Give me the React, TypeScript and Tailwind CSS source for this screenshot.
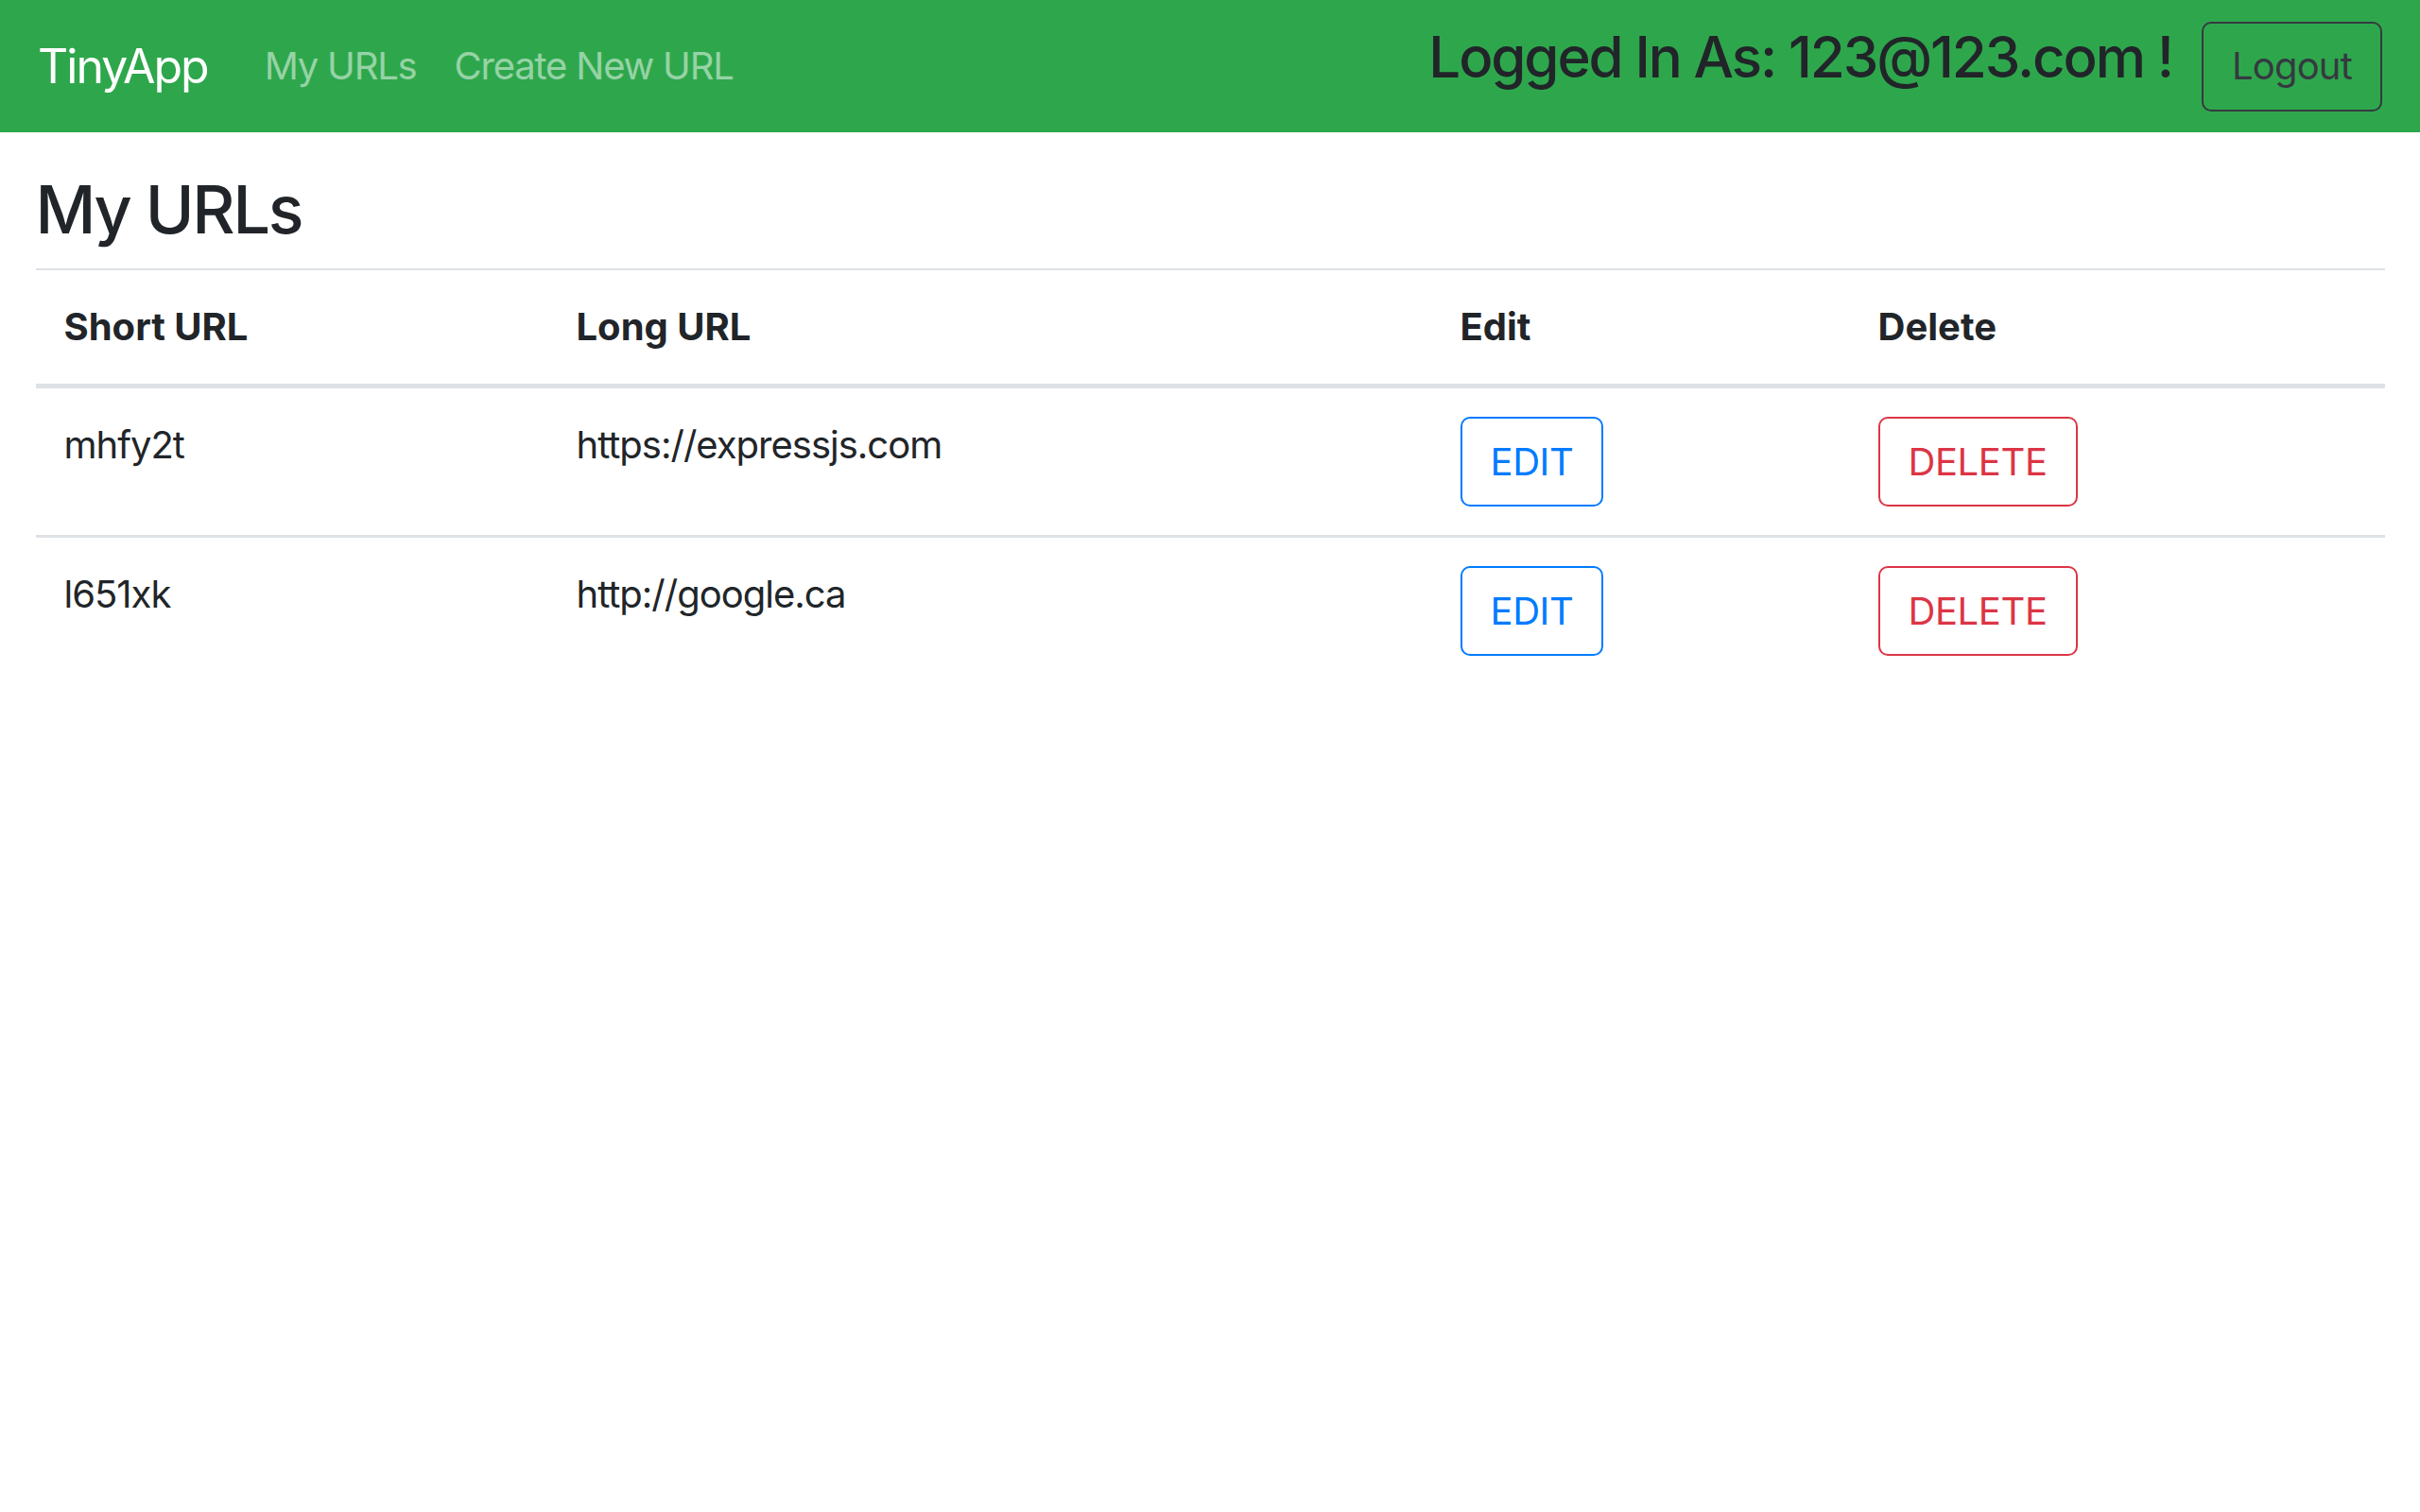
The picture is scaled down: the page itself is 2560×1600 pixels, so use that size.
const urls = [
  { short: 'mhfy2t', long: 'https://expressjs.com' },
  { short: 'l651xk', long: 'http://google.ca' },
];

export default function App() {
  return (
    <div
      className="min-h-screen bg-white text-[#212529]"
      style={{ fontFamily: 'Inter, "Noto Sans", sans-serif' }}
    >
      {/* Navbar */}
      <nav className="flex h-[140px] items-center justify-between bg-[#2ea74c] px-[40px] py-[20px]">
        <div className="flex items-center">
          <a className="mr-[40px] py-[12.5px] text-[50px] leading-[75px] tracking-[-0.04em] text-white">TinyApp</a>
          <a className="px-[20px] py-[20px] text-[40px] leading-[60px] tracking-[-0.03em] text-white/50">My URLs</a>
          <a className="px-[20px] py-[20px] text-[40px] leading-[60px] tracking-[-0.03em] text-white/50">Create New URL</a>
        </div>
        <div className="flex items-center gap-[31px]">
          <h4 className="mb-[20px] text-[60px] font-medium leading-[72px] tracking-[-0.035em] text-[#212529]">
            Logged In As: 123@123.com !
          </h4>
          <button className="h-[95px] rounded-[10px] border-[2.5px] border-[#343a40] px-[30px] text-[40px] leading-[60px] tracking-[-0.02em] text-[#343a40]">
            Logout
          </button>
        </div>
      </nav>

      {/* Main */}
      <main className="px-[37.5px] pt-[40px]">
        <h3 className="mb-[20px] text-[70px] font-medium leading-[84px] tracking-[-0.033em]">My URLs</h3>
        <table className="w-full table-fixed border-collapse text-left text-[40px] leading-[60px]">
          <thead>
            <tr>
              <th className="w-[542px] border-t-[2px] border-b-[5px] border-[#dee2e6] p-[30px] align-bottom font-bold">
                Short URL
              </th>
              <th className="w-[935px] border-t-[2px] border-b-[5px] border-[#dee2e6] p-[30px] align-bottom font-bold">
                Long URL
              </th>
              <th className="w-[442px] border-t-[2px] border-b-[5px] border-[#dee2e6] p-[30px] align-bottom font-bold">
                Edit
              </th>
              <th className="border-t-[2px] border-b-[5px] border-[#dee2e6] p-[30px] align-bottom font-bold">
                Delete
              </th>
            </tr>
          </thead>
          <tbody>
            {urls.map((u) => (
              <tr key={u.short}>
                <td className="border-t-[3px] border-[#dee2e6] p-[30px] align-top tracking-[-0.025em]">{u.short}</td>
                <td className="border-t-[3px] border-[#dee2e6] p-[30px] align-top tracking-[-0.025em]">{u.long}</td>
                <td className="border-t-[3px] border-[#dee2e6] p-[30px] align-top">
                  <button className="h-[95px] rounded-[10px] border-[2.5px] border-[#007bff] px-[30px] text-[40px] leading-[60px] tracking-[-0.01em] text-[#007bff]">
                    EDIT
                  </button>
                </td>
                <td className="border-t-[3px] border-[#dee2e6] p-[30px] align-top">
                  <button className="h-[95px] rounded-[10px] border-[2.5px] border-[#dc3545] px-[30px] text-[40px] leading-[60px] tracking-[-0.01em] text-[#dc3545]">
                    DELETE
                  </button>
                </td>
              </tr>
            ))}
          </tbody>
        </table>
      </main>
    </div>
  );
}
